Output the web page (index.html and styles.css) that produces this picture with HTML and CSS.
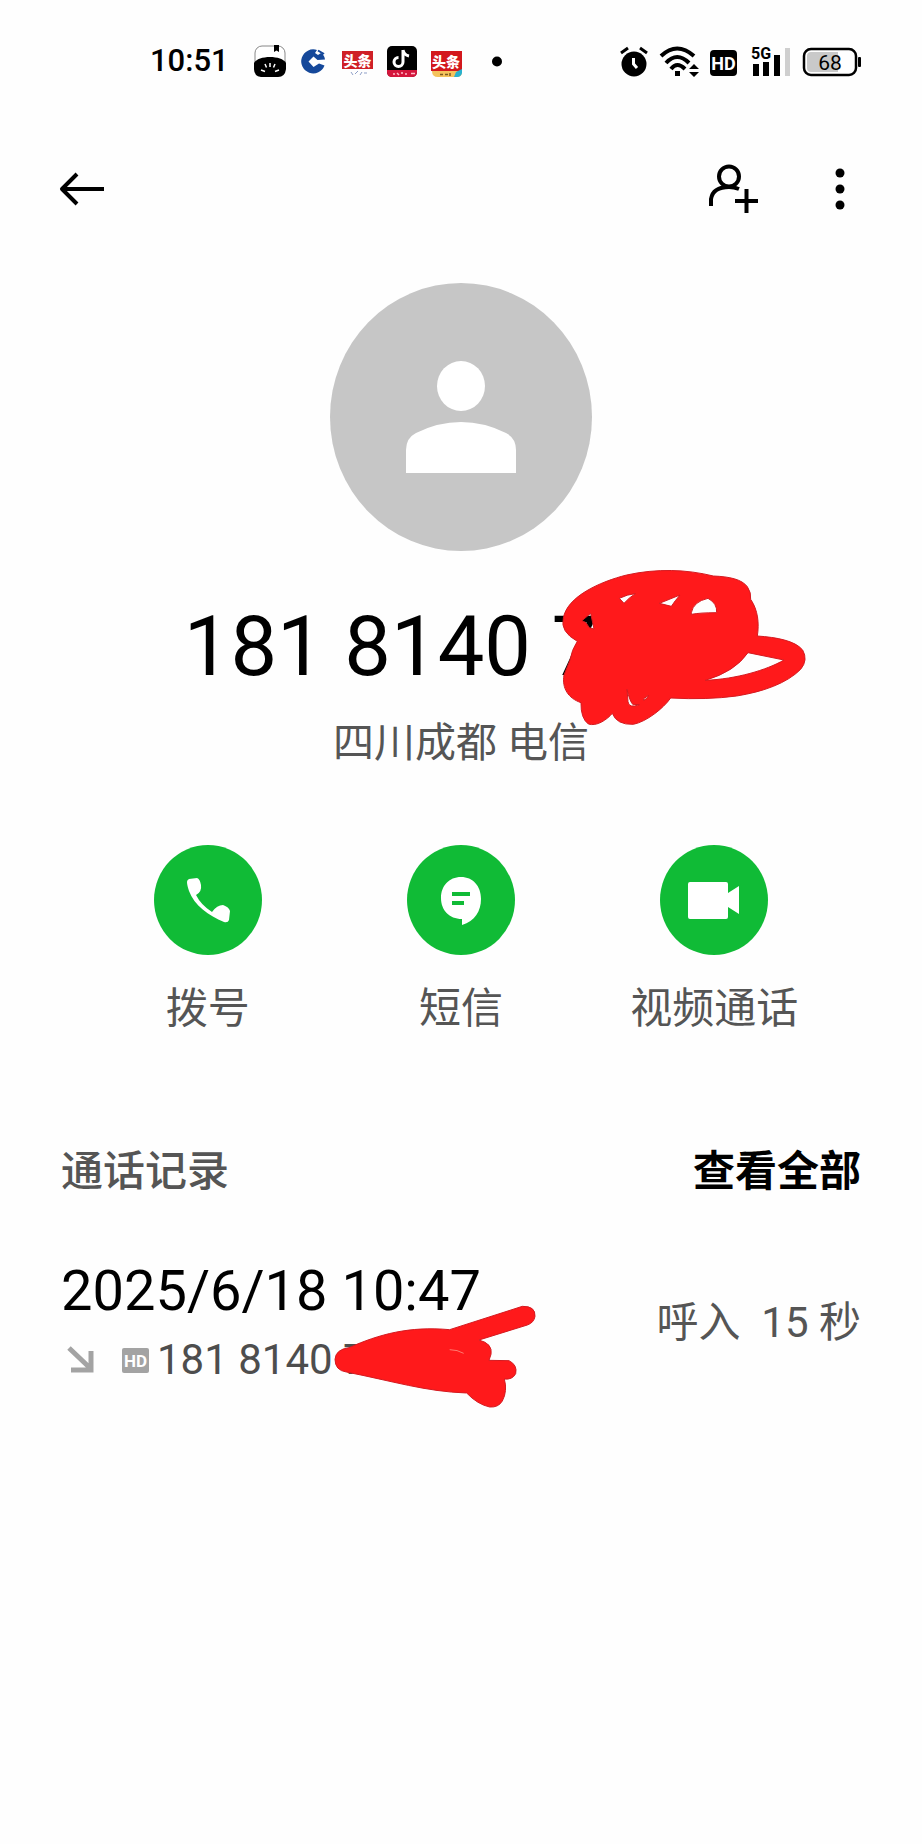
FILE: index.html
```
<!DOCTYPE html>
<html lang="zh-CN">
<head>
    <meta charset="UTF-8">
    <meta name="viewport" content="width=device-width, initial-scale=1.0">
    <title>通话记录</title>
    <link rel="stylesheet" href="styles.css">
</head>
<body>
    <div class="status-bar">
        <span class="time">10:51</span>
        <div class="status-apps">
            <svg width="32" height="32" viewBox="0 0 32 32">
                <rect x="1" y="1" width="30" height="30" rx="7" fill="#fff" stroke="#888" stroke-width="1"/>
                <path d="M0 18C4 10 28 10 32 18V24Q31 32 24 32H7Q0 31 0 24Z" fill="#000"/>
                <path d="M20 0H25V7L22.500 5.500 20 7Z" fill="#000"/>
                <path d="M16 18V22M11 19L12.500 22.500M21 19L19.500 22.500M7 25L11 26.500M25 25L21 26.500" stroke="#fff" stroke-width="1.500"/>
            </svg>
            <svg width="32" height="32" viewBox="0 0 32 32">
                <path d="M19 5A12 12 0 1 0 26.500 20.500L21 18.500 15.500 22 10.500 16.500 15.500 11.500 19.500 15 27 14.500Q26.500 10 23 8L20 10 17 8Z" fill="#15489a"/>
                <path d="M20 5.500L25 8.500 22 11.500" fill="none" stroke="#15489a" stroke-width="2"/>
            </svg>
            <svg width="32" height="32" viewBox="0 0 32 32">
                <rect x="0" y="6" width="31" height="18" fill="#cf2027"/>
                <text class="app-text" x="15.500" y="20.500" font-size="14">头条</text>
                <path d="M9 27L11 30M13 29L16 26M18 30L20 27M22 28H25" stroke="#8fa0c8" stroke-width="1"/>
            </svg>
            <svg width="32" height="32" viewBox="0 0 32 32">
                <rect x="1" y="1" width="30" height="31" rx="5" fill="#000"/>
                <path d="M1 25H31V27Q31 32 26 32H6Q1 32 1 27Z" fill="#d4163c"/>
                <path d="M17 5V17A4.500 4.500 0 1 1 12.500 12.500M17 5Q18 10 23 11" fill="none" stroke="#fff" stroke-width="3"/>
                <path d="M7 29H9M11 28L13 30M15 28H17M19 29H21M25 28.500H29" stroke="#ffb9c6" stroke-width="1.500"/>
            </svg>
            <svg width="32" height="32" viewBox="0 0 32 32">
                <rect x="1" y="6" width="31" height="20" fill="#d3181d"/>
                <path d="M2 26H32V27Q32 32 27 32H8Q2 32 2 26Z" fill="#f4c35c"/>
                <path d="M24 32L26 27 32 24V28Q31 32 27 32Z" fill="#28b1cf"/>
                <text class="app-text" x="16" y="21.500" font-size="14">头条</text>
                <path d="M10 29.500H13M15 29.500H18M20 28V31" stroke="#7c5a20" stroke-width="1.500"/>
            </svg>
            <svg width="48" height="32" viewBox="0 0 48 32"><circle cx="23" cy="16.500" r="5"/></svg>
        </div>
        <div class="status-system">
            <svg width="32" height="32" viewBox="0 0 32 32">
                <circle cx="18" cy="19" r="12.500"/>
                <path d="M5 8L12 3M31 8L24 3" stroke="#000" stroke-width="3"/>
                <path d="M17.500 13V19L21 23" fill="none" stroke="#fff" stroke-width="3"/>
            </svg>
            <svg width="42" height="32" viewBox="0 0 42 32">
                <path d="M4 11Q20 -4 37 11M9 18Q20 6 32 18M14 24Q20 16 28 24" fill="none" stroke="#000" stroke-width="4"/>
                <path d="M18 26H23V31H18ZM37 19L42 24H32ZM32 27H42L37 32Z"/>
            </svg>
            <svg width="32" height="32" viewBox="0 0 32 32">
                <rect x="2" y="5" width="27" height="26" rx="4"/>
                <text class="hd-text" x="15.500" y="24.500" font-size="18" fill="#fff">HD</text>
            </svg>
            <svg width="44" height="32" viewBox="0 0 44 32">
                <text class="hd-text" x="12" y="14" font-size="16">5G</text>
                <path d="M4 19H10V31H4ZM14 17H20V31H14ZM25 10H31V31H25Z"/>
                <rect x="36" y="3" width="5" height="28" fill="#cfcfcf"/>
            </svg>
            <svg width="60" height="32" viewBox="0 0 60 32">
                <rect x="2" y="4" width="52" height="26" rx="7" fill="#fff" stroke="#000" stroke-width="2.500"/>
                <path d="M9 7H36V27H9Q5 27 5 23V11Q5 7 9 7Z" fill="#c9c9c9"/>
                <rect x="56" y="12" width="3" height="10" rx="1"/>
                <text class="battery-text" x="28" y="25" font-size="21">68</text>
            </svg>
        </div>
    </div>

    <div class="toolbar">
        <button class="icon-btn" aria-label="返回">
            <svg width="48" height="48" viewBox="0 0 48 48">
                <path d="M46 24H5M19 9L4 24L19 39" fill="none" stroke="#000" stroke-width="4" stroke-linejoin="round"/>
            </svg>
        </button>
        <div class="toolbar-right">
            <button class="icon-btn" aria-label="新建联系人">
                <svg width="52" height="52" viewBox="0 0 52 52">
                    <circle cx="21" cy="13.500" r="10" fill="none" stroke="#000" stroke-width="4"/>
                    <path d="M3 43V36Q5 24 21 24Q26 24 31 26M38.500 26V50M27 38H50" fill="none" stroke="#000" stroke-width="4"/>
                </svg>
            </button>
            <button class="icon-btn" aria-label="更多">
                <svg width="48" height="52" viewBox="0 0 48 52">
                    <circle cx="24" cy="10" r="4.500"/>
                    <circle cx="24" cy="26" r="4.500"/>
                    <circle cx="24" cy="42" r="4.500"/>
                </svg>
            </button>
        </div>
    </div>

    <div class="profile">
        <svg class="avatar" width="262" height="268" viewBox="0 0 262 268">
            <ellipse cx="131" cy="134" rx="131" ry="134" fill="#c6c6c6"/>
            <ellipse cx="131" cy="103" rx="24" ry="25" fill="#fff"/>
            <path d="M76 190V167Q76 155 86 150Q108 139 131 139Q154 139 176 150Q186 155 186 167V190Z" fill="#fff"/>
        </svg>
        <h1 class="number">181 8140 7</h1>
        <p class="location">四川成都 电信</p>
        <svg class="scribble scribble-number" width="270" height="180" viewBox="0 0 810 540">
            <path fill-rule="evenodd" d="M82 244Q30 215 40 175C50 110 150 65 230 45C320 25 410 28 490 48C540 50 575 58 592 80Q604 97 602 118C624 150 628 190 622 228C680 232 735 242 758 270Q775 300 752 328C710 370 640 395 560 408Q470 420 362 414C340 445 290 485 250 493Q200 495 187 460C170 480 140 500 115 492Q92 475 93 428C55 415 35 385 42 345L60 300Q65 270 82 244ZM96 182L122 160L132 207L118 203L108 188ZM208 115Q232 103 256 101Q237 113 222 130ZM328 130L390 105Q375 122 364 139ZM424 158Q430 125 474 115Q502 130 500 158Q450 158 424 163ZM594 278L702 300C650 330 560 357 466 361Q555 335 594 278ZM231 388Q239 423 248 433L268 434Q236 446 234 425ZM281 416L296 406Q292 416 281 421Z"/>
        </svg>
    </div>

    <div class="actions">
        <button class="action">
            <svg width="108" height="110" viewBox="0 0 108 110">
                <ellipse cx="54" cy="55" rx="54" ry="55" fill="#10bb36"/>
                <path d="M35 34L43 33Q46 34 47 40Q48 47 42 50Q47 60 58 67Q63 60 69 60Q75 62 76 66L75 75Q74 78 70 77C55 71 40 60 35 46Q33 40 33 37Q33 35 35 34Z" fill="#fff"/>
            </svg>
            <span>拨号</span>
        </button>
        <button class="action">
            <svg width="108" height="110" viewBox="0 0 108 110">
                <ellipse cx="54" cy="55" rx="54" ry="55" fill="#10bb36"/>
                <path d="M54 32C66 32 74 41 74 54C74 66 68 76 55 80V74C42 74 34 65 34 53C34 41 42 32 54 32Z" fill="#fff"/>
                <path d="M45 49H63M45 58H57" stroke="#10bb36" stroke-width="4"/>
            </svg>
            <span>短信</span>
        </button>
        <button class="action">
            <svg width="108" height="110" viewBox="0 0 108 110">
                <ellipse cx="54" cy="55" rx="54" ry="55" fill="#10bb36"/>
                <path d="M30 37H66Q68 37 68 39V48L79 41V69L68 62V72Q68 74 66 74H30Q28 74 28 72V39Q28 37 30 37Z" fill="#fff"/>
            </svg>
            <span>视频通话</span>
        </button>
    </div>

    <div class="log-header">
        <h2>通话记录</h2>
        <a href="#">查看全部</a>
    </div>

    <div class="log-item">
        <div class="log-main">
            <div class="log-date">2025/6/18 10:47</div>
            <div class="log-number">
                <svg width="36" height="32" viewBox="0 0 36 32">
                    <path d="M8 4L29 24M30 7V26H10" fill="none" stroke="#a3a3a3" stroke-width="5"/>
                </svg>
                <svg class="hd-badge" width="28" height="32" viewBox="0 0 28 32">
                    <rect x="0" y="4" width="27" height="25" rx="2" fill="#a3a3a3"/>
                    <text class="hd-text" x="13.500" y="23" font-size="17" fill="#fff">HD</text>
                </svg>
                <span>181 8140 7</span>
            </div>
            <svg class="scribble scribble-log" width="230" height="130" viewBox="0 0 690 390">
                <path d="M82 243Q48 238 48 205Q50 175 90 170C180 130 270 105 392 116L610 46Q650 45 648 76Q645 95 625 102L480 147Q522 158 516 190L510 208L570 209Q596 222 590 248Q580 267 556 264Q566 300 550 330Q538 350 512 348Q475 340 443 306C320 302 220 270 82 243Z"/>
                <path class="scribble-gap" d="M392 176Q415 176 434 187"/>
            </svg>
        </div>
        <div class="log-duration">呼入&nbsp; 15 秒</div>
    </div>
</body>
</html>
```
FILE: styles.css
```
* {
    box-sizing: border-box;
}
body {
    margin: 0;
    min-height: 100vh;
    background: #fefefe;
    color: #000;
    font-family: Roboto, "Noto Sans CJK SC", sans-serif;
}
svg {
    display: block;
    flex-shrink: 0;
}
button {
    padding: 0;
    border: none;
    background: none;
    color: inherit;
    font-family: inherit;
    cursor: pointer;
}
.status-bar {
    display: flex;
    align-items: center;
    height: 42px;
    margin-top: 40px;
    padding: 0 60px 0 150px;
}
.time {
    font-size: 31px;
    font-weight: 500;
    line-height: 40px;
    margin-right: 25px;
}
.status-apps {
    display: flex;
    gap: 12px;
}
.status-system {
    display: flex;
    gap: 9px;
    margin-left: auto;
}
.app-text {
    font-weight: 900;
    fill: #fff;
    text-anchor: middle;
}
.hd-text {
    font-weight: 700;
    text-anchor: middle;
}
.battery-text {
    text-anchor: middle;
}
.toolbar {
    display: flex;
    align-items: center;
    justify-content: space-between;
    height: 80px;
    margin-top: 67px;
    padding: 0 58px;
}
.toolbar-right {
    display: flex;
    gap: 56px;
}
.profile {
    position: relative;
    display: flex;
    flex-direction: column;
    align-items: center;
    margin-top: 54px;
}
/* right padding keeps room for the masked digits */
.number {
    margin: 46px 0 0;
    padding-right: 140px;
    font-size: 83px;
    font-weight: 400;
    line-height: 100px;
    white-space: nowrap;
}
.location {
    margin: 16px 0 0;
    color: #555;
    font-size: 41px;
    line-height: 60px;
}
.scribble {
    position: absolute;
    overflow: visible;
    fill: #ff191b;
    stroke: #d41a20;
    stroke-width: 3;
}
.scribble-number {
    top: 277px;
    left: calc(50% + 89px);
}
.scribble-log {
    top: 35px;
    left: 258px;
}
.scribble-gap {
    fill: none;
    stroke: #ff7a70;
}
.actions {
    display: grid;
    grid-template-columns: repeat(3, 1fr);
    margin-top: 72px;
    padding: 0 81px;
}
.action {
    display: flex;
    flex-direction: column;
    align-items: center;
    gap: 24px;
    color: #555;
    font-size: 42px;
    line-height: 60px;
}
.log-header {
    display: flex;
    justify-content: space-between;
    margin-top: 103px;
    padding: 0 61px;
    font-size: 42px;
    line-height: 60px;
}
.log-header h2 {
    margin: 0;
    color: #555;
    font-size: 42px;
    font-weight: 500;
}
.log-header a {
    color: #000;
    font-weight: 700;
    text-decoration: none;
}
.log-item {
    display: flex;
    align-items: center;
    justify-content: space-between;
    margin-top: 54px;
    padding: 0 61px;
}
.log-main {
    position: relative;
}
.log-date {
    font-size: 56px;
    line-height: 70px;
}
.log-number {
    display: flex;
    align-items: center;
    margin-top: 4px;
    color: #4d4d4d;
    font-size: 42px;
    line-height: 60px;
}
.hd-badge {
    margin: 0 7px 0 25px;
}
.log-duration {
    color: #555;
    font-size: 42px;
    line-height: 60px;
}
```
